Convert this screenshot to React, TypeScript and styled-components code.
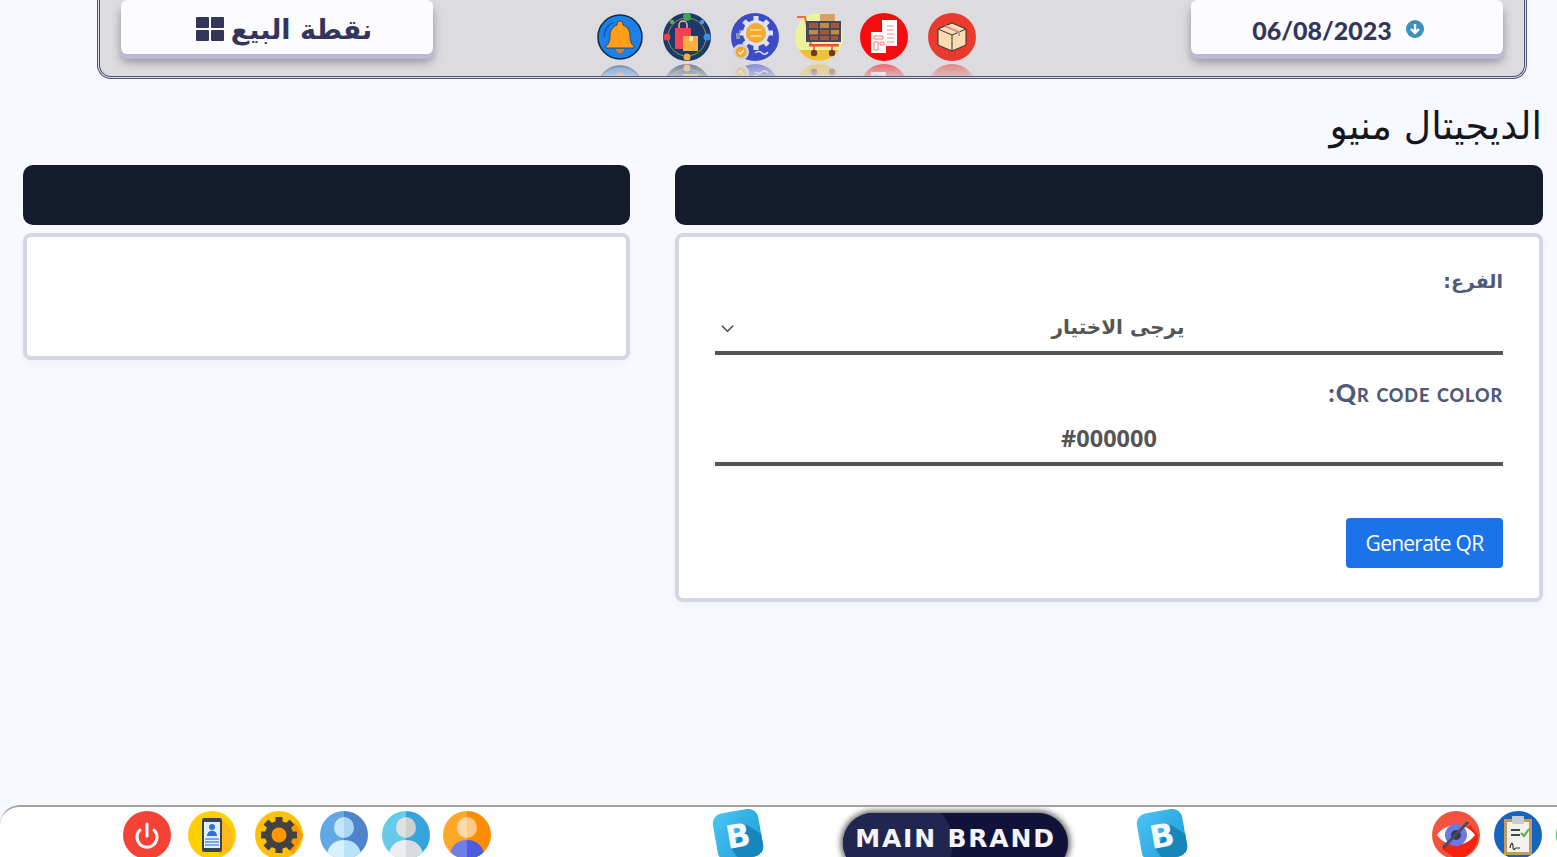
import { ReactNode } from "react"
import styled, { createGlobalStyle } from "styled-components"

const GlobalStyle = createGlobalStyle`
  * { box-sizing: border-box; }
  html, body { margin: 0; padding: 0; height: 100%; overflow: hidden; }
  body {
    background: #f7f9fe;
    font-family: "DejaVu Sans", sans-serif;
  }
`

const Page = styled.div`
  height: 857px;
  display: flex;
  flex-direction: column;
  overflow: hidden;
`

const TopBar = styled.header`
  direction: ltr;
  flex: none;
  height: 79px;
  margin: 0 30px 0 97px;
  padding: 0 21px;
  display: flex;
  justify-content: space-between;
  align-items: flex-start;
  background: #dcdce0;
  border: 3px double #4a5578;
  border-top: none;
  border-radius: 0 0 14px 14px;
  overflow: hidden;
`

const TopButton = styled.div<{ $shift: number }>`
  width: 312px;
  height: 54px;
  display: flex;
  align-items: center;
  justify-content: center;
  gap: 7px;
  padding-top: 4px;
  padding-left: ${(p) => (p.$shift > 0 ? p.$shift : 0)}px;
  padding-right: ${(p) => (p.$shift < 0 ? -p.$shift : 0)}px;
  background: #fcfcff;
  border-radius: 6px;
  color: #33365a;
  box-shadow: 0 5px 0 #bdb8d6, 0 8px 10px rgba(50, 50, 70, 0.45);
`

const PosLabel = styled.span`
  font-family: "DejaVu Sans", sans-serif;
  font-size: 27px;
  font-weight: 700;
  line-height: 1;
`

const DateLabel = styled.span`
  font-family: "Lato", sans-serif;
  font-size: 25px;
  font-weight: 900;
  margin: 2px 7px 0 0;
`

const TopIcons = styled.div`
  display: flex;
  margin: 13px 52px 0 0;
`

const TopIcon = styled.div<{ $gap: number }>`
  width: 48px;
  height: 48px;
  margin-right: ${(p) => p.$gap}px;
  -webkit-box-reflect: below 3px linear-gradient(transparent 60%, rgba(255, 255, 255, 0.55));
  svg { display: block; }
`

const Main = styled.main`
  direction: rtl;
  flex: 1;
  min-height: 0;
  padding: 23px 14px 0 23px;
`

const Title = styled.h1`
  margin: 0 1px 15px 0;
  font-family: "DejaVu Sans", sans-serif;
  font-size: 37.7px;
  font-weight: 400;
  line-height: 48px;
  color: #15171f;
`

const Columns = styled.div`
  display: grid;
  grid-template-columns: 868px 607px;
  column-gap: 45px;
  align-items: start;
`

const PanelHead = styled.div`
  height: 60px;
  margin-bottom: 8px;
  background: #131b2c;
  border-radius: 10px;
`

const Card = styled.section<{ $height: number }>`
  height: ${(p) => p.$height}px;
  padding: 30px 36px 0;
  background: #fff;
  border: 4px solid #d3d7e2;
  border-radius: 8px;
  box-shadow: 0 3px 6px rgba(40, 50, 90, 0.04);
`

const Label = styled.label`
  display: block;
  font-family: "DejaVu Sans", sans-serif;
  font-size: 19px;
  font-weight: 700;
  line-height: 28px;
  color: #4f5a7a;
`

const QrLabel = styled(Label)`
  margin-top: 22px;
  font-family: "Lato", sans-serif;
  font-variant: small-caps;
  font-size: 25px;
  font-weight: 900;
  line-height: 30px;
  letter-spacing: 0.9px;
`

const SelectWrap = styled.div`
  position: relative;
  margin-top: 14px;
`

const Select = styled.select`
  display: block;
  width: 100%;
  height: 46px;
  padding: 0 0 6px 18px;
  background: transparent;
  border: none;
  border-bottom: 4px solid #555;
  border-radius: 0;
  appearance: none;
  outline: none;
  text-align: center;
  text-align-last: center;
  font-family: "DejaVu Sans", sans-serif;
  font-size: 20px;
  font-weight: 700;
  color: #555;
`

const Chevron = styled.svg`
  position: absolute;
  left: 5px;
  top: 12px;
  width: 15px;
  height: 15px;
`

const ColorInput = styled.input`
  display: block;
  width: 100%;
  height: 46px;
  margin-top: 13px;
  padding: 0 0 6px;
  background: transparent;
  border: none;
  border-bottom: 4px solid #555;
  outline: none;
  text-align: center;
  font-family: "Open Sans", sans-serif;
  font-size: 23.5px;
  font-weight: 700;
  color: #555;
`

const Actions = styled.div`
  display: flex;
  margin-top: 52px;
`

const GenerateButton = styled.button`
  width: 157px;
  height: 50px;
  border: none;
  border-radius: 4px;
  background: #1a73e8;
  color: #fff;
  font-family: "Open Sans", sans-serif;
  font-size: 21px;
  font-weight: 500;
  letter-spacing: -0.75px;
`

const Footer = styled.footer`
  direction: ltr;
  flex: none;
  height: 52px;
  padding: 4px 0 0 123px;
  display: flex;
  align-items: flex-start;
  background: #fff;
  border-top: 2px solid #a3a3a3;
  border-radius: 20px 0 0 0;
  overflow: hidden;
`

const FootIcon = styled.div<{ $gap: number }>`
  flex: none;
  width: 48px;
  height: 48px;
  margin-left: ${(p) => p.$gap}px;
  svg { display: block; }
`

const BrandMark = styled.div<{ $gap: number }>`
  flex: none;
  width: 50px;
  height: 50px;
  margin-left: ${(p) => p.$gap}px;
  margin-top: -1px;
  svg { display: block; overflow: visible; }
`

const BrandPill = styled.div`
  position: relative;
  flex: none;
  width: 225px;
  height: 60px;
  margin: 2px 0 0 80px;
  padding-top: 11px;
  background: #10123a;
  border-radius: 30px;
  box-shadow: 0 0 6px 2px rgba(30, 30, 30, 0.75);
  overflow: hidden;
  text-align: center;
  font-family: "DejaVu Sans", sans-serif;
  font-size: 25px;
  font-weight: 700;
  letter-spacing: 1.8px;
  color: #f4f4fa;

  &::before {
    content: "";
    position: absolute;
    left: -10px;
    top: -20px;
    width: 120px;
    height: 100px;
    border-radius: 50%;
    background: #20264f;
  }
`

const BrandText = styled.span`
  position: relative;
`

const Bell = () => (
  <svg width="48" height="48" viewBox="0 0 48 48">
    <circle cx="24" cy="24" r="22" fill="#1a80ea" stroke="#1b2a40" strokeWidth="1.6" />
    <path d="M8 24a16 16 0 0 1 10-15" fill="none" stroke="#0f4f9c" strokeWidth="1.2" />
    <path d="M24 8a3 3 0 0 1 3 3v1c5 2 7 6 7 11 0 5 1 8 4 10v2H10v-2c3-2 4-5 4-10 0-5 2-9 7-11v-1a3 3 0 0 1 3-3z" fill="#ff9d1c" stroke="#3b3530" strokeWidth="0.8" />
    <path d="M20 36h8a4 4 0 0 1-8 0z" fill="#e9781a" />
  </svg>
)

const Bags = () => (
  <svg width="48" height="48" viewBox="0 0 48 48">
    <circle cx="24" cy="24" r="24" fill="#1d3869" />
    <circle cx="24" cy="24" r="19" fill="none" stroke="#8a9a4a" strokeWidth="1" />
    <rect x="12" y="15" width="16" height="21" fill="#ee4454" />
    <path d="M16 15v-3a4 4 0 0 1 8 0v3" fill="none" stroke="#f3b7a0" strokeWidth="1.5" />
    <rect x="20" y="23" width="15" height="15" fill="#f8b03c" />
    <rect x="26" y="23" width="4" height="5" fill="#fbe3ae" />
    <circle cx="24" cy="4" r="4" fill="#3fa84e" />
    <circle cx="44" cy="24" r="3.5" fill="#3f8fe0" />
    <circle cx="4" cy="24" r="3.5" fill="#e8404c" />
    <circle cx="24" cy="44" r="3.5" fill="#f4b040" />
    <circle cx="39" cy="9" r="2.2" fill="#4c9be6" />
    <circle cx="9" cy="9" r="2.2" fill="#55b35f" />
  </svg>
)

const Settings = () => (
  <svg width="48" height="48" viewBox="0 0 48 48">
    <circle cx="24" cy="24" r="24" fill="#3c4cc8" />
    <g stroke="#dfe2f2" strokeWidth="5">
      <path d="M25 3v34M8 20h34M13 8l24 24M37 8L13 32" />
    </g>
    <circle cx="25" cy="20" r="13" fill="#dfe2f2" />
    <circle cx="25" cy="20" r="10" fill="#f6a92a" />
    <path d="M19 17h12M19 23h12" stroke="#fde2a6" strokeWidth="1.5" />
    <circle cx="10" cy="39" r="8" fill="#cfd3e4" />
    <circle cx="10" cy="39" r="5.5" fill="#f6a92a" />
    <path d="M7.5 39l2 2 3.5-4" fill="none" stroke="#fff" strokeWidth="1.2" />
    <path d="M24 40q4-3 7 0t6-1" fill="none" stroke="#dfe3fa" strokeWidth="1.5" />
    <path d="M5 20h4v6H5zM8 17h2v3H8z" fill="#8d8fb2" />
  </svg>
)

const Cart = () => (
  <svg width="48" height="48" viewBox="0 0 48 48">
    <circle cx="24" cy="24" r="24" fill="#edf39a" />
    <path d="M4 37a24 24 0 0 0 40 0z" fill="#f2bf3a" />
    <rect x="25" y="1" width="15" height="9" fill="#d9a066" />
    <path d="M2 4h8l6 28h26" fill="none" stroke="#ef6a4c" strokeWidth="2" />
    <rect x="11" y="8" width="35" height="21" fill="#46485a" />
    <g fill="#a5573a">
      <rect x="14" y="10" width="9" height="5" />
      <rect x="25" y="10" width="9" height="5" fill="#c08a4a" />
      <rect x="36" y="10" width="8" height="5" />
      <rect x="14" y="17" width="9" height="4.5" fill="#c08a4a" />
      <rect x="25" y="17" width="9" height="4.5" />
      <rect x="36" y="17" width="8" height="4.5" fill="#c08a4a" />
      <rect x="15" y="23" width="8" height="4" />
      <rect x="25" y="23" width="9" height="4" />
      <rect x="36" y="23" width="7" height="4" />
    </g>
    <rect x="14" y="31" width="30" height="2.5" fill="#ef4a3c" />
    <path d="M19 33v4M37 33v4" stroke="#ef4a3c" strokeWidth="1.5" />
    <circle cx="19" cy="40" r="3.2" fill="#6b3d20" />
    <circle cx="37" cy="40" r="3.2" fill="#6b3d20" />
  </svg>
)

const Invoices = () => (
  <svg width="48" height="48" viewBox="0 0 48 48">
    <circle cx="24" cy="24" r="24" fill="#f50d0d" />
    <path d="M22 7h15v26H22z" fill="#fff" />
    <path d="M27 13h7M27 17h7M27 21h7M27 25h7M27 29h7" stroke="#f88" strokeWidth="1" />
    <rect x="11" y="19" width="15" height="21" fill="#fff" />
    <path d="M14 23h9v3h-9zM14 29h4v8h-4zM20 29h4v3h-4z" fill="none" stroke="#f77" strokeWidth="1" />
  </svg>
)

const Box = () => (
  <svg width="48" height="48" viewBox="0 0 48 48">
    <circle cx="24" cy="24" r="24" fill="#ea3a2e" />
    <path d="M24 10l14 6v16l-14 6-14-6V16z" fill="#fbdcb0" stroke="#333" strokeWidth="1" />
    <path d="M10 16l14 6 14-6M24 22v16" fill="none" stroke="#333" strokeWidth="1" />
    <path d="M17 13l14 6v4" fill="none" stroke="#c99" strokeWidth="2" />
  </svg>
)

const Power = () => (
  <svg width="48" height="48" viewBox="0 0 48 48">
    <circle cx="24" cy="24" r="24" fill="#f44336" />
    <path d="M17 19a10 10 0 1 0 14 0" fill="none" stroke="#fff" strokeWidth="3" strokeLinecap="round" />
    <path d="M24 13v12" stroke="#fff" strokeWidth="3" strokeLinecap="round" />
  </svg>
)

const Phone = () => (
  <svg width="48" height="48" viewBox="0 0 48 48">
    <circle cx="24" cy="24" r="24" fill="#ffd000" />
    <path d="M34 9A24 24 0 0 1 42 40L32 44 24 30z" fill="#ffb81c" />
    <rect x="14" y="7" width="20" height="34" rx="2" fill="#37474f" />
    <rect x="16" y="11" width="16" height="26" fill="#e3eefc" />
    <circle cx="24" cy="16" r="3" fill="#2f6fe0" />
    <path d="M19 25c0-7 10-7 10 0z" fill="#2f6fe0" />
    <path d="M17 28h14M17 31h14M17 34h14" stroke="#5b8fe8" strokeWidth="1.5" />
  </svg>
)

const Gear = () => (
  <svg width="48" height="48" viewBox="0 0 48 48">
    <circle cx="24" cy="24" r="24" fill="#ffc107" />
    <path d="M24 24L40 12 48 24 38 44z" fill="#ff9800" />
    <g stroke="#424242" strokeWidth="7">
      <path d="M24 6v36M6 24h36M11 11l26 26M37 11L11 37" />
    </g>
    <circle cx="24" cy="24" r="14" fill="#424242" />
    <circle cx="24" cy="24" r="7.5" fill="#ff9800" />
  </svg>
)

const Person = ({ left, right, head, headShade, body, bodyShade }: { left: string; right: string; head: string; headShade: string; body: string; bodyShade: string }) => (
  <svg width="48" height="48" viewBox="0 0 48 48">
    <defs>
      <clipPath id={`c${left.slice(1)}`}>
        <circle cx="24" cy="24" r="24" />
      </clipPath>
    </defs>
    <g clipPath={`url(#c${left.slice(1)})`}>
      <rect width="24" height="48" fill={left} />
      <rect x="24" width="24" height="48" fill={right} />
      <path d="M24 6a10 10.500 0 0 0 0 21z" fill={head} />
      <path d="M24 6a10 10.500 0 0 1 0 21z" fill={headShade} />
      <path d="M24 29c-10 0-17 6-18 19h18z" fill={body} />
      <path d="M24 29c10 0 17 6 18 19H24z" fill={bodyShade} />
    </g>
  </svg>
)

const Eye = () => (
  <svg width="48" height="48" viewBox="0 0 48 48">
    <circle cx="24" cy="24" r="24" fill="#f4533f" />
    <path d="M38 14L46 24A24 24 0 0 1 24 48L10 38z" fill="#f5230f" />
    <path d="M5 24C14 11 34 11 43 24 34 37 14 37 5 24z" fill="#fff" />
    <circle cx="24" cy="24" r="11" fill="#6d78e3" />
    <circle cx="24" cy="24" r="5" fill="#333a52" />
    <path d="M11 37L36 11" stroke="#474e60" strokeWidth="3" />
  </svg>
)

const Clipboard = () => (
  <svg width="48" height="48" viewBox="0 0 48 48">
    <circle cx="24" cy="24" r="24" fill="#1565c0" />
    <rect x="10" y="8" width="28" height="36" fill="#c69a5c" />
    <rect x="13" y="11" width="22" height="30" fill="#f2f2ea" />
    <rect x="18" y="5" width="12" height="8" rx="1" fill="#c5ccd4" />
    <path d="M17 19h9M17 24h9" stroke="#37474f" strokeWidth="2" />
    <path d="M27 22l3 3 5-7" fill="none" stroke="#4caf50" strokeWidth="2" />
    <path d="M16 37c1-6 3-6 3-1s2 1 3 1 2 0 4 0" fill="none" stroke="#333" strokeWidth="1.2" />
  </svg>
)

const Green = () => (
  <svg width="48" height="48" viewBox="0 0 48 48">
    <circle cx="24" cy="24" r="24" fill="#2ecc58" />
  </svg>
)

const BrandB = ({ id }: { id: string }) => (
  <svg width="50" height="50" viewBox="0 0 50 50">
    <defs>
      <linearGradient id={id} x1="0" y1="0" x2="1" y2="1">
        <stop offset="0" stopColor="#4cc4f4" />
        <stop offset="1" stopColor="#1a9ad6" />
      </linearGradient>
    </defs>
    <g transform="rotate(-10 25 25)">
      <rect x="2" y="1" width="46" height="48" rx="10" fill={`url(#${id})`} />
      <path d="M35 16L48 28v11a10 10 0 0 1-10 10H22L16 38z" fill="#1686bd" />
      <text x="25" y="37" textAnchor="middle" fontFamily="'DejaVu Sans', sans-serif" fontWeight="700" fontSize="32" fill="#f2f7fb">B</text>
    </g>
  </svg>
)

const topIcons: { key: string; gap: number; icon: ReactNode }[] = [
  { key: "bell", gap: 19, icon: <Bell /> },
  { key: "bags", gap: 20, icon: <Bags /> },
  { key: "settings", gap: 16, icon: <Settings /> },
  { key: "cart", gap: 17, icon: <Cart /> },
  { key: "invoices", gap: 20, icon: <Invoices /> },
  { key: "box", gap: 0, icon: <Box /> },
]

export default function App() {
  return (
    <Page>
      <GlobalStyle />
      <TopBar>
        <TopButton $shift={14}>
          <svg width="28" height="24" viewBox="0 0 28 24" fill="#33365a">
            <rect width="13" height="11" rx="1" />
            <rect x="15" width="13" height="11" rx="1" />
            <rect y="13" width="13" height="11" rx="1" />
            <rect x="15" y="13" width="13" height="11" rx="1" />
          </svg>
          <PosLabel dir="rtl">نقطة البيع</PosLabel>
        </TopButton>
        <TopIcons>
          {topIcons.map((t) => (
            <TopIcon key={t.key} $gap={t.gap}>{t.icon}</TopIcon>
          ))}
        </TopIcons>
        <TopButton $shift={-18}>
          <DateLabel>06/08/2023</DateLabel>
          <svg width="18" height="18" viewBox="0 0 18 18">
            <circle cx="9" cy="9" r="9" fill="#3d8fc0" />
            <path d="M9 4v9M5 9l4 4 4-4" fill="none" stroke="#fff" strokeWidth="2.4" />
          </svg>
        </TopButton>
      </TopBar>

      <Main>
        <Title>الديجيتال منيو</Title>
        <Columns>
          <div>
            <PanelHead />
            <Card $height={369}>
              <Label>الفرع:</Label>
              <SelectWrap>
                <Select defaultValue="">
                  <option value="">يرجى الاختيار</option>
                </Select>
                <Chevron viewBox="0 0 16 16" fill="none" stroke="#444" strokeWidth="1.6">
                  <path d="M2 5l6 6 6-6" />
                </Chevron>
              </SelectWrap>
              <QrLabel>Qr code color:</QrLabel>
              <ColorInput readOnly value="#000000" />
              <Actions>
                <GenerateButton>Generate QR</GenerateButton>
              </Actions>
            </Card>
          </div>
          <div>
            <PanelHead />
            <Card $height={127} />
          </div>
        </Columns>
      </Main>

      <Footer>
        <FootIcon $gap={0}><Power /></FootIcon>
        <FootIcon $gap={17}><Phone /></FootIcon>
        <FootIcon $gap={19}><Gear /></FootIcon>
        <FootIcon $gap={17}>
          <Person left="#62a8e5" right="#4f83cc" head="#c4e6fb" headShade="#a8d6f5" body="#d8f2fd" bodyShade="#b8e4fa" />
        </FootIcon>
        <FootIcon $gap={14}>
          <Person left="#66cbe8" right="#33a5dc" head="#e0e0e0" headShade="#cfcfcf" body="#eceff1" bodyShade="#d9dcde" />
        </FootIcon>
        <FootIcon $gap={13}>
          <Person left="#ffa726" right="#fb8c00" head="#ffd9a8" headShade="#ffc98a" body="#6f7ee8" bodyShade="#4c5ce0" />
        </FootIcon>
        <BrandMark $gap={222}><BrandB id="brand-a" /></BrandMark>
        <BrandPill><BrandText>MAIN BRAND</BrandText></BrandPill>
        <BrandMark $gap={69}><BrandB id="brand-b" /></BrandMark>
        <FootIcon $gap={245}><Eye /></FootIcon>
        <FootIcon $gap={14}><Clipboard /></FootIcon>
        <FootIcon $gap={14}><Green /></FootIcon>
      </Footer>
    </Page>
  )
}
